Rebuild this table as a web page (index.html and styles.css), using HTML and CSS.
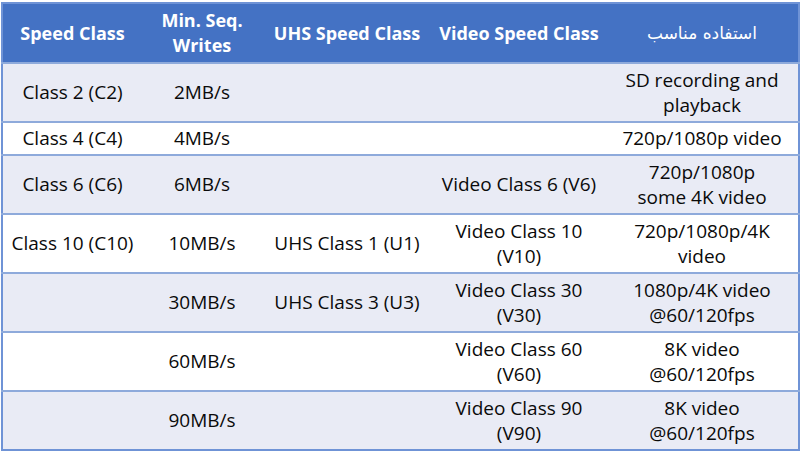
FILE: index.html
```html
<!DOCTYPE html>
<html lang="en">
<head>
<meta charset="utf-8">
<title>SD Speed Classes</title>
<link rel="stylesheet" href="styles.css">
</head>
<body>
<table class="speed-table">
  <colgroup>
    <col class="c1"><col class="c2"><col class="c3"><col class="c4"><col class="c5">
  </colgroup>
  <thead>
    <tr class="head">
      <th>Speed Class</th>
      <th>Min. Seq.<br>Writes</th>
      <th>UHS Speed Class</th>
      <th>Video Speed Class</th>
      <th dir="rtl" class="fa">استفاده مناسب</th>
    </tr>
  </thead>
  <tbody>
    <tr class="tall shade">
      <td>Class 2 (C2)</td><td>2MB/s</td><td></td><td></td><td>SD recording and<br>playback</td>
    </tr>
    <tr class="short">
      <td>Class 4 (C4)</td><td>4MB/s</td><td></td><td></td><td>720p/1080p video</td>
    </tr>
    <tr class="tall shade">
      <td>Class 6 (C6)</td><td>6MB/s</td><td></td><td>Video Class 6 (V6)</td><td>720p/1080p<br>some 4K video</td>
    </tr>
    <tr class="tall">
      <td>Class 10 (C10)</td><td>10MB/s</td><td>UHS Class 1 (U1)</td><td>Video Class 10<br>(V10)</td><td>720p/1080p/4K<br>video</td>
    </tr>
    <tr class="tall shade">
      <td></td><td>30MB/s</td><td>UHS Class 3 (U3)</td><td>Video Class 30<br>(V30)</td><td>1080p/4K video<br>@60/120fps</td>
    </tr>
    <tr class="tall">
      <td></td><td>60MB/s</td><td></td><td>Video Class 60<br>(V60)</td><td>8K video<br>@60/120fps</td>
    </tr>
    <tr class="tall shade">
      <td></td><td>90MB/s</td><td></td><td>Video Class 90<br>(V90)</td><td>8K video<br>@60/120fps</td>
    </tr>
  </tbody>
</table>
</body>
</html>
```
FILE: styles.css
```css
html, body {
  margin: 0;
  padding: 0;
  background: #ffffff;
}
body {
  padding: 2px 0 0 1px;
  font-family: "Open Sans", "DejaVu Sans", sans-serif;
  color: #0a0a0a;
}
.speed-table {
  width: 797px;
  border-collapse: collapse;
  table-layout: fixed;
  border: 2px solid #6f93d6;
  font-size: 19px;
  line-height: 25px;
}
.c1 { width: 140px; }
.c2 { width: 120px; }
.c3 { width: 170px; }
.c4 { width: 174px; }
.c5 { width: 193px; }
.speed-table th,
.speed-table td {
  padding: 0;
  text-align: center;
  vertical-align: middle;
  white-space: nowrap;
}
.head {
  height: 60px;
  background: #4472c4;
  color: #ffffff;
  font-size: 18px;
}
.head th {
  font-weight: 700;
}
.head th.fa {
  font-family: "DejaVu Sans", sans-serif;
  font-size: 17px;
  font-weight: 400;
}
tbody tr {
  border-top: 2px solid #8eaadb;
  background: #ffffff;
}
tbody tr.shade {
  background: #e9ebf5;
}
tr.tall { height: 59px; }
tr.short { height: 33px; }
```
